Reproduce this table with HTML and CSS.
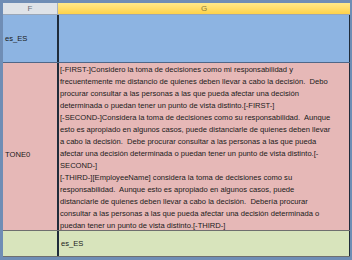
FILE: index.html
```html
<!DOCTYPE html>
<html>
<head>
<meta charset="utf-8">
<link rel="stylesheet" href="styles.css">
</head>
<body>
<div class="sheet">
  <div class="row hdr">
    <div class="c-f hdr-f">F</div>
    <div class="c-g hdr-g">G</div>
  </div>
  <div class="row blue">
    <div class="c-f lbl">es_ES</div>
    <div class="c-g"></div>
  </div>
  <div class="row pink">
    <div class="c-f lbl tone">TONE0</div>
    <div class="c-g txt"><div class="ln">[-FIRST-]Considero la toma de decisiones como mi responsabilidad y</div><div class="ln">frecuentemente me distancio de quienes deben llevar a cabo la decisión.  Debo</div><div class="ln">procurar consultar a las personas a las que pueda afectar una decisión</div><div class="ln">determinada o puedan tener un punto de vista distinto.[-FIRST-]</div><div class="ln">[-SECOND-]Considera la toma de decisiones como su responsabilidad.  Aunque</div><div class="ln">esto es apropiado en algunos casos, puede distanciarle de quienes deben llevar</div><div class="ln">a cabo la decisión.  Debe procurar consultar a las personas a las que pueda</div><div class="ln">afectar una decisión determinada o puedan tener un punto de vista distinto.[-</div><div class="ln">SECOND-]</div><div class="ln">[-THIRD-][EmployeeName] considera la toma de decisiones como su</div><div class="ln">responsabilidad.  Aunque esto es apropiado en algunos casos, puede</div><div class="ln">distanciarle de quienes deben llevar a cabo la decisión.  Debería procurar</div><div class="ln">consultar a las personas a las que pueda afectar una decisión determinada o</div><div class="ln">puedan tener un punto de vista distinto.[-THIRD-]</div></div>
  </div>
  <div class="row green">
    <div class="c-f"></div>
    <div class="c-g lbl">es_ES</div>
  </div>
</div>
</body>
</html>
```
FILE: styles.css
```css
html, body {
  margin: 0;
  padding: 0;
  background: #6f8db5;
}
.sheet {
  width: 352px;
  height: 260px;
  box-sizing: border-box;
  border-style: solid;
  border-color: #6f8db5;
  border-width: 3px 2px 3px 3px;
  display: flex;
  flex-direction: column;
  font-family: "Liberation Sans", Arial, sans-serif;
  font-size: 7.6px;
  color: #1a1a1a;
}
.row {
  display: flex;
  flex: none;
  box-sizing: border-box;
}
.c-f {
  width: 56px;
  box-sizing: border-box;
  border-right: 2px solid #1f2b3a;
  flex: none;
}
.c-g {
  flex: 1;
  box-sizing: border-box;
  border-right: 1px solid #1f2b3a;
}
.hdr {
  height: 12px;
  border-bottom: 1px solid #9aa7b8;
}
.hdr-f {
  background: #dfe3e8;
  border-right: 1px solid #a9b2bd;
  width: 55px;
  color: #6a6f76;
  text-align: center;
  line-height: 11px;
  font-size: 8px;
}
.hdr-g {
  background: linear-gradient(#ffe98a, #ffd24a);
  border-right: none;
  color: #8a7a3a;
  text-align: center;
  line-height: 11px;
  font-size: 8px;
}
.blue {
  height: 48px;
  background: #8db4e2;
  border-bottom: 1px solid #4f6788;
}
.pink {
  height: 168px;
  background: #e6b8b7;
  border-bottom: 1px solid #6f6f6f;
}
.green {
  height: 26px;
  background: #d8e4bc;
  border-bottom: 1px solid #6f6f6f;
}
.lbl {
  display: flex;
  align-items: center;
  padding-left: 2px;
}
.tone {
  padding-top: 15px;
}
.txt {
  padding: 1px 0 0 1px;
  line-height: 12px;
}
.ln {
  white-space: pre;
  height: 12px;
}
```
